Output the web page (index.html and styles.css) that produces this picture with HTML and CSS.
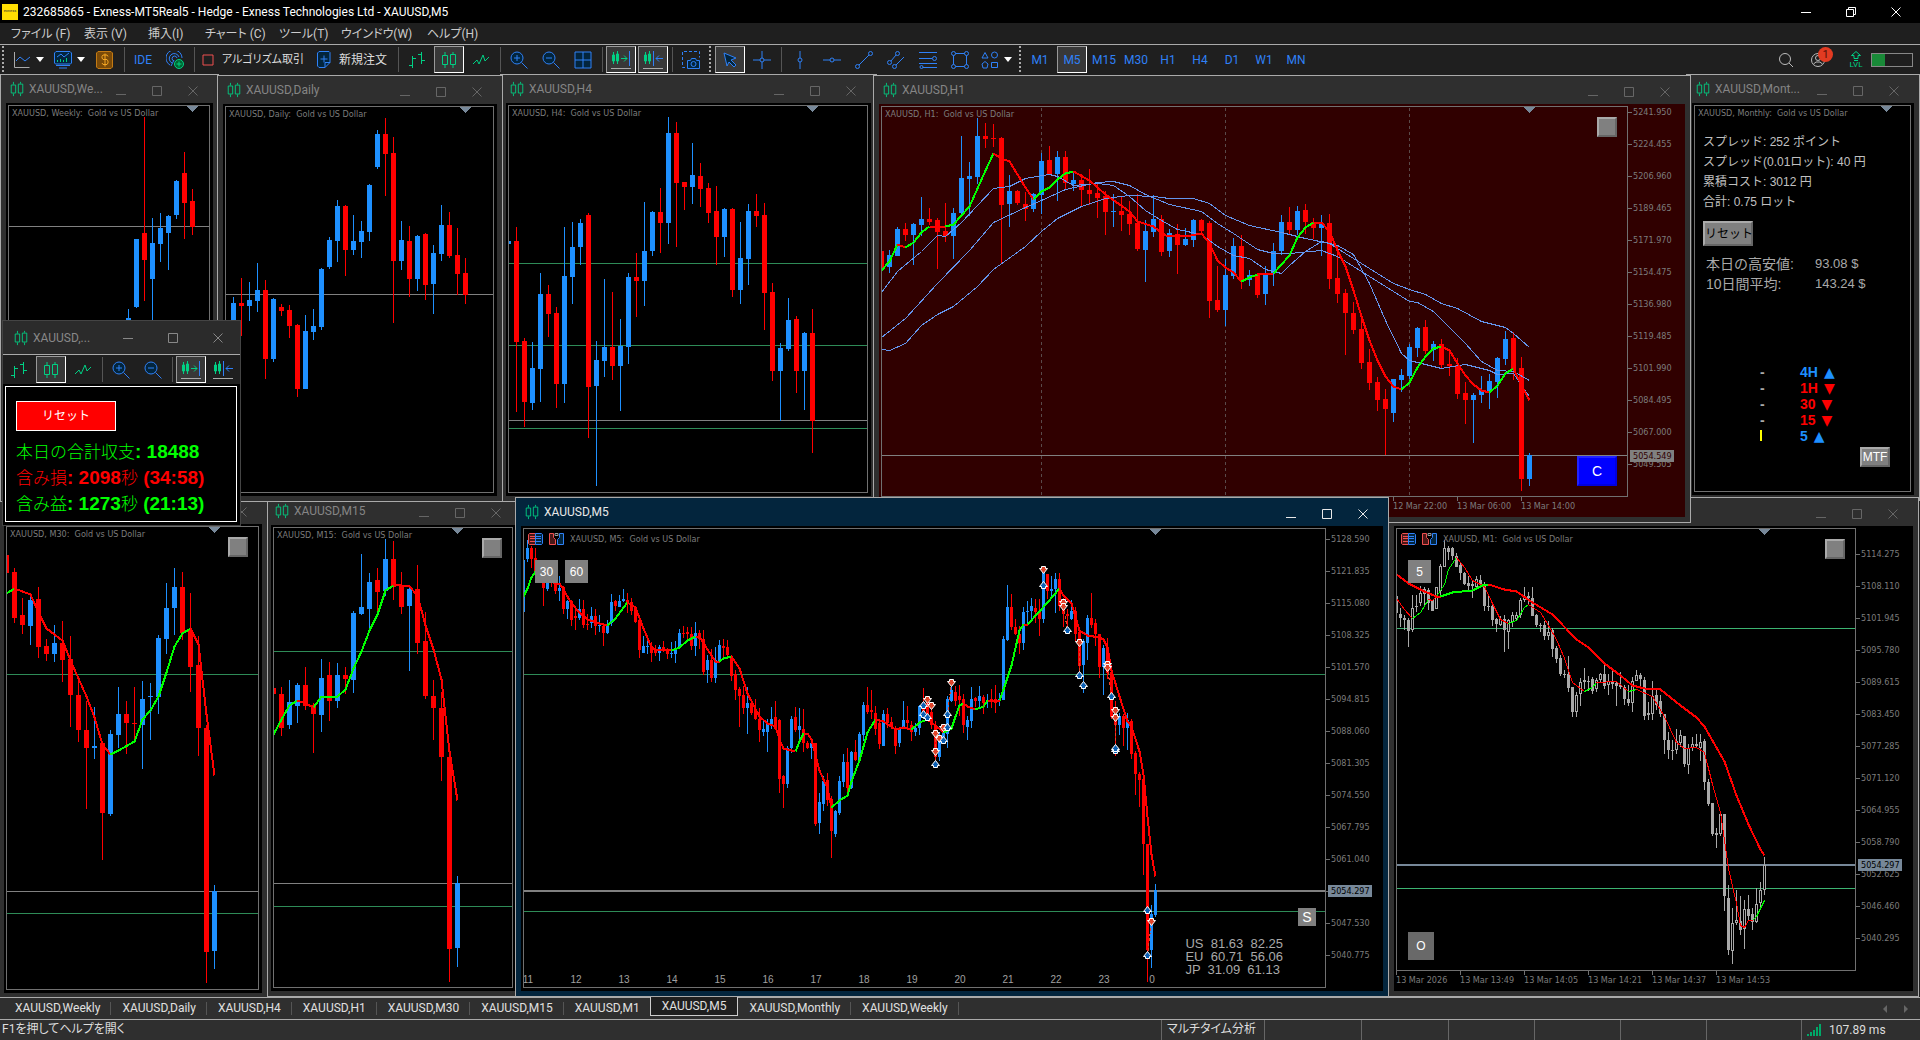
FILE: index.html
```html
<!DOCTYPE html>
<html lang="ja">
<head>
    <meta charset="UTF-8">
    <meta name="viewport" content="width=device-width, initial-scale=1.0">
    <title>232685865 - Exness-MT5Real5 - Hedge - Exness Technologies Ltd - XAUUSD,M5</title>
    <link rel="stylesheet" href="styles.css">
</head>
<body>
    <svg class="sprite" aria-hidden="true">
        <symbol id="candles" viewBox="0 0 18 18"><path d="M5 1v3M5 14v3M13 1v2M13 14v3M2.500 4.500h5v9h-5zM10.500 3.500h5v10h-5z"/></symbol>
        <symbol id="bars" viewBox="0 0 18 18"><path d="M4.500 5v12M1 14.500h3M5 7.500h3M13.500 1v12M10 3.500h3M14 9.500h3"/></symbol>
        <symbol id="line" viewBox="0 0 18 18"><path d="M1 13l4-4 2 4 4-9 2 6 4-4"/></symbol>
        <symbol id="zoomin" viewBox="0 0 18 18"><circle cx="7" cy="7" r="6" fill="#03253d"/><path d="M11.500 11.500l6 6M4 7h6M7 4v6"/></symbol>
        <symbol id="zoomout" viewBox="0 0 18 18"><circle cx="7" cy="7" r="6" fill="#03253d"/><path d="M11.500 11.500l6 6M4 7h6"/></symbol>
        <symbol id="scroll" viewBox="0 0 20 20"><path class="g" d="M2.500 2v12M6.500 1v13M1.500 5h2v6h-2zM5.500 4h2v7h-2zM10 8.500h6M13 5.500l3 3-3 3"/><path d="M18.500 1v15"/><path stroke="#aaa" d="M0 18.500h20"/></symbol>
        <symbol id="shift" viewBox="0 0 20 20"><path class="g" d="M2.500 2v12M6.500 1v13M1.500 5h2v6h-2zM5.500 4h2v7h-2z"/><path d="M10.500 1v15M13 8.500h7M16 5.500l-3 3 3 3"/><path stroke="#aaa" d="M0 18.500h20"/></symbol>
        <symbol id="min" viewBox="0 0 10 10"><path d="M0 8.500h10"/></symbol>
        <symbol id="max" viewBox="0 0 10 10"><path d="M.5.5h9v9h-9z"/></symbol>
        <symbol id="close" viewBox="0 0 10 10"><path d="M.5.5l9 9M9.500.5l-9 9"/></symbol>
        <symbol id="depth" viewBox="0 0 15 12"><path stroke="#f05050" fill="#4a1717" d="M7.500.5h-6l-1 1v9l1 1h6"/><path stroke="#2f81f7" fill="#03253d" d="M7.500.5h6l1 1v9l-1 1h-6z"/><path stroke="#f05050" d="M2 3.500h5M2 5.500h5M2 8.500h5"/><path stroke="#2f81f7" d="M8 3.500h5M8 5.500h5M8 8.500h5"/></symbol>
        <symbol id="oneclick" viewBox="0 0 15 12"><path stroke="#f05050" fill="#4a1717" d="M.5.5h4v4l2 2v5h-6z"/><path stroke="#2f81f7" fill="#03253d" d="M14.500.5h-4v4l-2 2v5h6z"/><path stroke="#999" d="M6 .5h3v2h-3z"/></symbol>
    </svg>

    <header class="titlebar">
        <span class="logo">exness</span>
        <h1>232685865 - Exness-MT5Real5 - Hedge - Exness Technologies Ltd - XAUUSD,M5</h1>
        <div class="controls">
            <button aria-label="最小化"><svg viewBox="0 0 10 10"><path d="M0 5.500h10"/></svg></button>
            <button aria-label="元に戻す"><svg viewBox="0 0 10 10"><path d="M.5 2.500h7v7h-7zM2.500 2.500v-2h7v7h-2"/></svg></button>
            <button aria-label="閉じる"><svg><use href="#close"/></svg></button>
        </div>
    </header>

    <nav class="menu">
        <button>ファイル (F)</button>
        <button>表示 (V)</button>
        <button>挿入(I)</button>
        <button>チャート (C)</button>
        <button>ツール(T)</button>
        <button>ウインドウ(W)</button>
        <button>ヘルプ(H)</button>
    </nav>

    <div class="toolbar">
        <i class="grip"></i>
        <button class="w40" aria-label="チャート"><svg viewBox="0 0 18 18"><path stroke="#aaa" d="M1.500 1v15.500h15"/><path d="M3 10l4-4 5 4 5-4"/></svg><i class="caret"></i></button>
        <button class="w38" aria-label="プロファイル"><svg viewBox="0 0 18 18"><path fill="#03253d" d="M2 .5h14l1.500 1.500v10l-1 1h-15l-1-1v-10z"/><path d="M3 6l4-3 3 3 5-4M2 14.500h14M5 17h8"/><path class="g" d="M3.500 11v-2M6.500 11v-3M9.500 11v-2M12.500 11v-4"/></svg><i class="caret"></i></button>
        <button aria-label="取引"><svg class="gold" viewBox="0 0 18 18"><path fill="#7a4a08" stroke="#c47a13" d="M2 .5h13l1.500 1.500v14l-1.500 1.500h-13l-1.500-1.500v-14z"/><path stroke="#f5a623" d="M12 5.500l-1-1.500h-4l-1 1.500v1.500l1 1.500h4l1 1.500v2l-1 1.500h-4l-1-1.500M9 2.500v13"/></svg></button>
        <i class="sep"></i>
        <button>IDE</button>
        <button aria-label="シグナル"><svg viewBox="0 0 18 18"><path d="M4 14a8 8 0 1 1 12-7M6 12a5 5 0 1 1 7-6M8 10a2.500 2.500 0 1 1 3-3M8 9l-3 6"/><circle class="g" cx="13" cy="13" r="4.500" fill="#063"/><path class="g" d="M10.500 13h5M13 10.500v5"/></svg></button>
        <i class="sep"></i>
        <button class="w110 text"><svg viewBox="0 0 12 12"><path stroke="#f05050" d="M1 1h10v10h-10z"/></svg>アルゴリズム取引</button>
        <button class="w84 text"><svg class="tall" viewBox="0 0 14 18"><path fill="#03253d" d="M2 .5h10l1 1v10l-5 5h-6l-1.500-1.500v-13zM8 16.500v-5h5M3.500 8h7M7 4.500v7"/></svg>新規注文</button>
        <i class="sep"></i>
        <button aria-label="バー"><svg class="green"><use href="#bars"/></svg></button>
        <button class="on" aria-label="ローソク足"><svg class="green"><use href="#candles"/></svg></button>
        <button aria-label="ライン"><svg class="green"><use href="#line"/></svg></button>
        <i class="sep"></i>
        <button aria-label="拡大"><svg><use href="#zoomin"/></svg></button>
        <button aria-label="縮小"><svg><use href="#zoomout"/></svg></button>
        <button aria-label="整列"><svg viewBox="0 0 18 18"><path fill="#03253d" d="M1 1h16v16h-16zM9 1v16M1 9h16"/></svg></button>
        <i class="sep"></i>
        <button class="on" aria-label="自動スクロール"><svg class="big"><use href="#scroll"/></svg></button>
        <button class="on" aria-label="チャートシフト"><svg class="big"><use href="#shift"/></svg></button>
        <i class="sep"></i>
        <button aria-label="スクリーンショット"><svg class="big" viewBox="0 0 20 20"><path stroke-dasharray="3 2" d="M4 17.500h-2.500v-16h17v6"/><path fill="#03253d" d="M6.500 10.500h3l1-2h4l1 2h3v8h-12z"/><circle cx="12.500" cy="14" r="2.500"/></svg></button>
        <i class="grip"></i>
        <button class="on" aria-label="カーソル"><svg viewBox="0 0 18 18"><path fill="#03253d" d="M3 2l12 5-5 2 5 5-2 2-5-5-2 4z"/></svg></button>
        <button aria-label="クロスヘア"><svg viewBox="0 0 18 18"><path d="M9 0v7M9 11v7M0 9h7M11 9h7"/><circle cx="9" cy="9" r="2"/></svg></button>
        <i class="sep"></i>
        <button aria-label="垂直線"><svg viewBox="0 0 18 18"><path d="M9 0v7M9 11v7"/><circle cx="9" cy="9" r="2"/></svg></button>
        <button aria-label="水平線"><svg viewBox="0 0 18 18"><path d="M0 9h7M11 9h7"/><circle cx="9" cy="9" r="2"/></svg></button>
        <button aria-label="トレンドライン"><svg viewBox="0 0 18 18"><circle cx="2.500" cy="15.500" r="2"/><circle cx="15.500" cy="2.500" r="2"/><path d="M4 14l10-10"/></svg></button>
        <button aria-label="チャネル"><svg viewBox="0 0 18 18"><circle cx="2.500" cy="11.500" r="2"/><circle cx="10.500" cy="2.500" r="2"/><circle cx="7.500" cy="15.500" r="2"/><path d="M4 10l5-6M9 14l8-8"/></svg></button>
        <button aria-label="フィボナッチ"><svg viewBox="0 0 18 18"><path d="M0 1.500h18M0 7.500h13M0 12.500h18M4 16.500h14"/><circle cx="15.500" cy="7.500" r="2"/><circle cx="2.500" cy="16" r="1.500"/></svg></button>
        <button aria-label="長方形"><svg viewBox="0 0 18 18"><circle cx="2.500" cy="2.500" r="2"/><circle cx="15.500" cy="2.500" r="2"/><circle cx="2.500" cy="15.500" r="2"/><circle cx="15.500" cy="15.500" r="2"/><path d="M4.500 2.500h9M4.500 15.500h9M2.500 4.500v9M15.500 4.500v9"/></svg></button>
        <button class="w39" aria-label="図形"><svg viewBox="0 0 18 18"><path d="M4 1.500l3 5.500h-6zM10.500 11.500h6v5h-6zM4 10.500l3 2.500-1 4h-4l-1-4z"/><circle cx="13.500" cy="4" r="3"/></svg><i class="caret"></i></button>
        <i class="grip"></i>
        <button>M1</button>
        <button class="on">M5</button>
        <button>M15</button>
        <button>M30</button>
        <button>H1</button>
        <button>H4</button>
        <button>D1</button>
        <button>W1</button>
        <button>MN</button>
        <div class="tray">
            <button aria-label="検索"><svg class="gray" viewBox="0 0 18 18"><circle cx="8" cy="8" r="5.500"/><path d="M12 12l4 4"/></svg></button>
            <button class="user" aria-label="アカウント"><svg class="gray" viewBox="0 0 18 18"><circle cx="9" cy="9" r="6.500"/><circle cx="9" cy="7" r="2.500"/><path d="M4.500 13l2.500-2h4l2.500 2"/></svg><b class="badge">1</b></button>
            <span class="lvl"><svg class="green" viewBox="0 0 12 10"><path d="M6 .5l4.500 4h-2.500v3h-4v-3h-2.500zM4 9.500h4"/></svg>LVL</span>
            <span class="battery"><i></i></span>
        </div>
    </div>

    <main class="desktop">
        <section class="window w-m15">
            <div class="caption"><svg class="green"><use href="#candles"/></svg><h2>XAUUSD,M15</h2>
                <div class="controls"><button aria-label="最小化"><svg><use href="#min"/></svg></button><button aria-label="最大化"><svg><use href="#max"/></svg></button><button aria-label="閉じる"><svg><use href="#close"/></svg></button></div></div>
            <div class="chart"><div class="plot"><svg class="series" data-chart="m15"></svg><p class="symbol">XAUUSD, M15:&nbsp; Gold vs US Dollar</p><button class="toggle" aria-label="切替"></button></div></div>
        </section>

        <section class="window w-m30">
            <div class="caption"><svg class="green"><use href="#candles"/></svg><h2></h2>
                <div class="controls"><button aria-label="最小化"><svg><use href="#min"/></svg></button><button aria-label="最大化"><svg><use href="#max"/></svg></button><button aria-label="閉じる"><svg><use href="#close"/></svg></button></div></div>
            <div class="chart"><div class="plot"><svg class="series" data-chart="m30"></svg><p class="symbol">XAUUSD, M30:&nbsp; Gold vs US Dollar</p><button class="toggle" aria-label="切替"></button></div></div>
        </section>

        <section class="window w-h4">
            <div class="caption"><svg class="green"><use href="#candles"/></svg><h2>XAUUSD,H4</h2>
                <div class="controls"><button aria-label="最小化"><svg><use href="#min"/></svg></button><button aria-label="最大化"><svg><use href="#max"/></svg></button><button aria-label="閉じる"><svg><use href="#close"/></svg></button></div></div>
            <div class="chart"><div class="plot"><svg class="series" data-chart="h4"></svg><p class="symbol">XAUUSD, H4:&nbsp; Gold vs US Dollar</p></div></div>
        </section>

        <section class="window w-weekly">
            <div class="caption"><svg class="green"><use href="#candles"/></svg><h2>XAUUSD,We...</h2>
                <div class="controls"><button aria-label="最小化"><svg><use href="#min"/></svg></button><button aria-label="最大化"><svg><use href="#max"/></svg></button><button aria-label="閉じる"><svg><use href="#close"/></svg></button></div></div>
            <div class="chart"><div class="plot"><svg class="series" data-chart="weekly"></svg><p class="symbol">XAUUSD, Weekly:&nbsp; Gold vs US Dollar</p></div></div>
        </section>

        <section class="window w-daily">
            <div class="caption"><svg class="green"><use href="#candles"/></svg><h2>XAUUSD,Daily</h2>
                <div class="controls"><button aria-label="最小化"><svg><use href="#min"/></svg></button><button aria-label="最大化"><svg><use href="#max"/></svg></button><button aria-label="閉じる"><svg><use href="#close"/></svg></button></div></div>
            <div class="chart"><div class="plot"><svg class="series" data-chart="daily"></svg><p class="symbol">XAUUSD, Daily:&nbsp; Gold vs US Dollar</p></div></div>
        </section>

        <section class="window w-monthly">
            <div class="caption"><svg class="green"><use href="#candles"/></svg><h2>XAUUSD,Mont...</h2>
                <div class="controls"><button aria-label="最小化"><svg><use href="#min"/></svg></button><button aria-label="最大化"><svg><use href="#max"/></svg></button><button aria-label="閉じる"><svg><use href="#close"/></svg></button></div></div>
            <div class="chart">
                <div class="plot">
                    <svg class="series" data-chart="monthly"></svg>
                    <p class="symbol">XAUUSD, Monthly:&nbsp; Gold vs US Dollar</p>
                    <div class="info">
                        <p>スプレッド: 252 ポイント</p>
                        <p>スプレッド(0.01ロット): 40 円</p>
                        <p>累積コスト: 3012 円</p>
                        <p>合計: 0.75 ロット</p>
                        <button class="bevel">リセット</button>
                        <dl class="range">
                            <dt>本日の高安値:</dt><dd>93.08 $</dd>
                            <dt>10日間平均:</dt><dd>143.24 $</dd>
                        </dl>
                        <ul class="trend">
                            <li class="up"><i>-</i>4H <span>▲</span></li>
                            <li class="down"><i>-</i>1H <span>▼</span></li>
                            <li class="down"><i>-</i>30 <span>▼</span></li>
                            <li class="down"><i>-</i>15 <span>▼</span></li>
                            <li class="up"><i class="mark"></i>5 <span>▲</span></li>
                        </ul>
                        <button class="bevel mtf">MTF</button>
                    </div>
                </div>
            </div>
        </section>

        <section class="window w-m1">
            <div class="caption"><svg class="green"><use href="#candles"/></svg><h2></h2>
                <div class="controls"><button aria-label="最小化"><svg><use href="#min"/></svg></button><button aria-label="最大化"><svg><use href="#max"/></svg></button><button aria-label="閉じる"><svg><use href="#close"/></svg></button></div></div>
            <div class="chart scaled timed">
                <div class="plot"><svg class="series" data-chart="m1"></svg>
                    <p class="symbol traded"><svg><use href="#depth"/></svg><svg><use href="#oneclick"/></svg>XAUUSD, M1:&nbsp; Gold vs US Dollar</p>
                    <div class="quick"><button>5</button></div>
                    <button class="toggle" aria-label="切替"></button>
                    <button class="order">O</button>
                </div>
                <ol class="prices"><li>5114.275</li><li>5108.110</li><li>5101.945</li><li>5095.780</li><li>5089.615</li><li>5083.450</li><li>5077.285</li><li>5071.120</li><li>5064.955</li><li>5058.790</li><li>5052.625</li><li>5046.460</li><li>5040.295</li></ol>
                <output class="last">5054.297</output>
                <ol class="times"><li>13 Mar 2026</li><li>13 Mar 13:49</li><li>13 Mar 14:05</li><li>13 Mar 14:21</li><li>13 Mar 14:37</li><li>13 Mar 14:53</li></ol>
            </div>
        </section>

        <section class="window w-h1">
            <div class="caption"><svg class="green"><use href="#candles"/></svg><h2>XAUUSD,H1</h2>
                <div class="controls"><button aria-label="最小化"><svg><use href="#min"/></svg></button><button aria-label="最大化"><svg><use href="#max"/></svg></button><button aria-label="閉じる"><svg><use href="#close"/></svg></button></div></div>
            <div class="chart scaled timed">
                <div class="plot"><svg class="series" data-chart="h1"></svg><p class="symbol">XAUUSD, H1:&nbsp; Gold vs US Dollar</p>
                    <button class="toggle" aria-label="切替"></button>
                    <button class="close-all">C</button>
                </div>
                <ol class="prices"><li>5241.950</li><li>5224.455</li><li>5206.960</li><li>5189.465</li><li>5171.970</li><li>5154.475</li><li>5136.980</li><li>5119.485</li><li>5101.990</li><li>5084.495</li><li>5067.000</li><li>5049.505</li></ol>
                <output class="last">5054.549</output>
                <ol class="times"><li>12 Mar 22:00</li><li>13 Mar 06:00</li><li>13 Mar 14:00</li></ol>
            </div>
        </section>

        <section class="window active w-m5">
            <div class="caption"><svg class="green"><use href="#candles"/></svg><h2>XAUUSD,M5</h2>
                <div class="controls"><button aria-label="最小化"><svg><use href="#min"/></svg></button><button aria-label="最大化"><svg><use href="#max"/></svg></button><button aria-label="閉じる"><svg><use href="#close"/></svg></button></div></div>
            <div class="chart scaled">
                <div class="plot"><svg class="series" data-chart="m5"></svg>
                    <p class="symbol traded"><svg><use href="#depth"/></svg><svg><use href="#oneclick"/></svg>XAUUSD, M5:&nbsp; Gold vs US Dollar</p>
                    <div class="quick"><button>30</button><button>60</button></div>
                    <button class="side">S</button>
                    <pre class="sessions">US  81.63  82.25
EU  60.71  56.06
JP  31.09  61.13</pre>
                    <ol class="hours"><li>11</li><li>12</li><li>13</li><li>14</li><li>15</li><li>16</li><li>17</li><li>18</li><li>19</li><li>20</li><li>21</li><li>22</li><li>23</li><li>0</li></ol>
                </div>
                <ol class="prices"><li>5128.590</li><li>5121.835</li><li>5115.080</li><li>5108.325</li><li>5101.570</li><li>5094.815</li><li>5088.060</li><li>5081.305</li><li>5074.550</li><li>5067.795</li><li>5061.040</li><li></li><li>5047.530</li><li>5040.775</li></ol>
                <output class="last">5054.297</output>
            </div>
        </section>

        <section class="floating">
            <div class="caption"><svg class="green"><use href="#candles"/></svg><h2>XAUUSD,...</h2>
                <div class="controls"><button aria-label="最小化"><svg viewBox="0 0 10 10"><path d="M0 5.500h10"/></svg></button><button aria-label="最大化"><svg><use href="#max"/></svg></button><button aria-label="閉じる"><svg><use href="#close"/></svg></button></div></div>
            <div class="toolbar">
                <button aria-label="バー"><svg class="green"><use href="#bars"/></svg></button>
                <button class="on" aria-label="ローソク足"><svg class="green"><use href="#candles"/></svg></button>
                <button aria-label="ライン"><svg class="green"><use href="#line"/></svg></button>
                <i class="sep"></i>
                <button aria-label="拡大"><svg><use href="#zoomin"/></svg></button>
                <button aria-label="縮小"><svg><use href="#zoomout"/></svg></button>
                <i class="sep"></i>
                <button class="on" aria-label="自動スクロール"><svg class="big"><use href="#scroll"/></svg></button>
                <button aria-label="チャートシフト"><svg class="big"><use href="#shift"/></svg></button>
            </div>
            <div class="summary">
                <button>リセット</button>
                <p>本日の合計収支<b>: 18488</b></p>
                <p class="loss">含み損<b>: 2098</b>秒<b> (34:58)</b></p>
                <p>含み益<b>: 1273</b>秒<b> (21:13)</b></p>
            </div>
        </section>
    </main>

    <nav class="tabs">
        <button>XAUUSD,Weekly</button>
        <button>XAUUSD,Daily</button>
        <button>XAUUSD,H4</button>
        <button>XAUUSD,H1</button>
        <button>XAUUSD,M30</button>
        <button>XAUUSD,M15</button>
        <button>XAUUSD,M1</button>
        <button class="current">XAUUSD,M5</button>
        <button>XAUUSD,Monthly</button>
        <button>XAUUSD,Weekly</button>
        <div class="arrows"><button aria-label="前へ"></button><button class="next" aria-label="次へ"></button></div>
    </nav>

    <footer class="status">
        <span>F1を押してヘルプを開く</span>
        <span>マルチタイム分析</span>
        <span></span><span></span><span></span><span></span><span></span><span></span>
        <span class="ping"><svg viewBox="0 0 15 12"><path d="M1 12v-2M4 12v-4M7 12v-6M10 12v-9M13 12v-12"/></svg>107.89 ms</span>
    </footer>

    <script src="charts.js"></script>
</body>
</html>
```
FILE: styles.css
```css
* {
    box-sizing: border-box;
}

body {
    margin: 0;
    height: 100vh;
    display: flex;
    flex-direction: column;
    overflow: hidden;
    background: #1f1f1f;
    color: #ddd;
    font-family: Roboto, "Noto Sans CJK JP", sans-serif;
    font-size: 12px;
    line-height: 16px;
}

button {
    padding: 0;
    border: 0;
    background: none;
    color: inherit;
    font: inherit;
}

h1, h2, p, ol, ul, dl, dd, pre {
    margin: 0;
    padding: 0;
    list-style: none;
    font-size: inherit;
    font-weight: normal;
}

svg {
    display: block;
    flex: none;
    width: 18px;
    height: 18px;
    fill: none;
    stroke: #2f81f7;
}

.sprite {
    position: absolute;
    width: 0;
    height: 0;
}

.green, .g {
    stroke: #00d084;
}

.gray {
    stroke: #bbb;
}

/* application frame */
.titlebar {
    flex: none;
    display: flex;
    align-items: center;
    height: 23px;
    padding: 0 2px;
    background: #000;
    color: #fff;
}

.logo {
    width: 16px;
    height: 16px;
    margin-right: 5px;
    background: #ffde02;
    color: #333;
    font-size: 4px;
    line-height: 14px;
    text-align: center;
}

.controls {
    display: flex;
    margin-left: auto;
}

.controls button {
    width: 45px;
    display: flex;
    justify-content: center;
}

.controls svg {
    width: 10px;
    height: 10px;
    stroke: currentColor;
}

.menu {
    flex: none;
    display: grid;
    grid-template-columns: 73px 64px 57px 74px 62px 86px 60px;
    height: 22px;
    padding: 0 11px;
    border-bottom: 1px solid #aaa;
    font-feature-settings: "palt";
    color: #ccc;
}

.menu button {
    text-align: left;
}

.toolbar {
    flex: none;
    display: flex;
    align-items: center;
    height: 29px;
    background: #1f1f1f;
    color: #2f81f7;
}

.toolbar button {
    flex: none;
    display: flex;
    align-items: center;
    justify-content: center;
    width: 30px;
    height: 27px;
    margin: 0 1px;
}

.toolbar .on {
    border: 1px solid #fff;
    border-top-color: #999;
    border-left-color: #999;
    background: #383838;
}

.toolbar .w40 { width: 40px; }
.toolbar .w38 { width: 38px; }
.toolbar .w39 { width: 39px; }
.toolbar .w84 { width: 84px; }
.toolbar .w110 { width: 110px; font-size: 11px; }

.toolbar .text {
    gap: 8px;
    color: #ddd;
    font-feature-settings: "palt";
}

.toolbar .text svg {
    width: 12px;
    height: 12px;
}

.toolbar .text .tall {
    width: 14px;
    height: 18px;
}

.toolbar .big {
    width: 20px;
    height: 20px;
}

.sep {
    flex: none;
    width: 1px;
    height: 25px;
    margin: 0 2px 0 3px;
    background: #555;
}

.grip {
    flex: none;
    width: 2px;
    height: 27px;
    margin: 0 3px 0 2px;
    background: repeating-linear-gradient(#aaa 0 2px, transparent 2px 4px);
}

.caret {
    margin-left: 5px;
    border: 4px solid transparent;
    border-top: 5px solid #fff;
    border-bottom: 0;
}

.tray {
    display: flex;
    align-items: center;
    margin-left: auto;
    padding-right: 7px;
}

.user {
    position: relative;
}

.badge {
    position: absolute;
    top: 1px;
    right: 0;
    width: 15px;
    height: 15px;
    border-radius: 8px;
    background: #e23b22;
    color: #551008;
    font-weight: normal;
    font-size: 11px;
    line-height: 15px;
}

.lvl {
    width: 22px;
    margin: 0 4px 0 11px;
    color: #00d084;
    font-size: 8px;
    line-height: 8px;
    text-align: center;
}

.lvl svg {
    width: 12px;
    height: 10px;
    margin: 0 auto;
}

.battery {
    width: 42px;
    height: 14px;
    border: 1px solid #888;
}

.battery i {
    display: block;
    width: 32%;
    height: 100%;
    background: #198a38;
}

/* chart windows */
.desktop {
    position: relative;
    flex: 1;
    overflow: hidden;
    background: #1f1f1f;
}

.window {
    position: absolute;
    display: flex;
    flex-direction: column;
    padding: 0 5px 5px;
    border: 1px solid #aaa;
    background: #2f2f2f;
    color: #858585;
}

.w-weekly { left: 0; top: 0; width: 219px; height: 428px; }
.w-daily { left: 217px; top: 1px; width: 286px; height: 427px; }
.w-h4 { left: 500px; top: 0; width: 377px; height: 428px; }
.w-h1 { left: 873px; top: 1px; width: 818px; height: 448px; }
.w-monthly { left: 1686px; top: 0; width: 234px; height: 427px; }
.w-m30 { left: -2px; top: 421px; width: 270px; height: 504px; }
.w-m15 { left: 265px; top: 422px; width: 257px; height: 501px; }
.w-m5 { left: 515px; top: 423px; width: 874px; height: 500px; }
.w-m1 { left: 1388px; top: 423px; width: 531px; height: 500px; }

.active {
    background: #03253d;
    color: #e8e8e8;
}

.caption {
    flex: none;
    display: flex;
    align-items: center;
    height: 28px;
}

.caption h2 {
    flex: 1;
    min-width: 0;
    white-space: nowrap;
}

.caption > svg {
    width: 16px;
    height: 16px;
    margin: 0 4px 0 3px;
}

.window .controls {
    margin-right: 2px;
    padding-top: 3px;
    color: #666;
}

.window .controls button {
    width: 36px;
}

.active .controls {
    color: #e8e8e8;
}

.chart {
    position: relative;
    flex: 1;
    display: grid;
    grid-template-columns: 1fr;
    grid-template-rows: 1fr;
    padding: 2px 3px 3px 2px;
    background: #000;
    color: #7c7c7c;
    font-family: "DejaVu Sans Condensed", "Liberation Sans", sans-serif;
    font-size: 9px;
    line-height: 12px;
}

.scaled {
    grid-template-columns: 1fr 57px;
    padding-right: 0;
}

.timed {
    grid-template-rows: 1fr 20px;
    padding-bottom: 0;
}

.plot {
    position: relative;
    min-width: 0;
    min-height: 0;
    border: 1px solid #707070;
    overflow: hidden;
}

.plot button {
    font-family: "Liberation Sans", "Noto Sans CJK JP", sans-serif;
}

.series {
    position: absolute;
    width: 100%;
    height: 100%;
    stroke: none;
    shape-rendering: crispEdges;
}

.symbol {
    position: relative;
    display: flex;
    padding-left: 3px;
    white-space: nowrap;
    line-height: 14px;
}

.traded {
    align-items: center;
    gap: 6px;
    padding: 3px 4px;
}

.traded svg {
    width: 15px;
    height: 12px;
}

.prices {
    overflow: hidden;
}

.prices li {
    display: flex;
    align-items: center;
    gap: 1px;
    height: 32px;
}

.prices li::before {
    content: "";
    width: 4px;
    height: 1px;
    background: #707070;
}

.w-m5 .prices { margin-top: -5px; }
.w-m1 .prices { padding-top: 10px; }
.w-h1 .prices { margin-top: -10px; }

.last {
    position: absolute;
    right: 11px;
    width: 44px;
    padding-left: 3px;
    background: #778899;
    color: #000;
    line-height: 12px;
}

.w-m5 .last { top: 359px; }
.w-m1 .last { top: 333px; }
.w-h1 .last { top: 346px; background: #808080; color: #300000; }

.times {
    grid-column: 1 / -1;
    display: flex;
}

.times li {
    flex: none;
    width: 64px;
    padding-top: 3px;
    white-space: nowrap;
    background: linear-gradient(#707070, #707070) no-repeat 0 0 / 1px 4px;
}

.w-h1 .chart { background: #300000; }
.w-h1 .times { padding-left: 512px; }

.hours {
    position: absolute;
    left: -20px;
    bottom: 0;
    display: flex;
    color: #a0a0a0;
    font-family: "Liberation Sans", sans-serif;
    font-size: 10px;
    line-height: 14px;
}

.hours li {
    width: 48px;
    text-align: center;
}

.toggle, .bevel {
    border: 2px solid #666;
    border-top-color: #aaa;
    border-left-color: #aaa;
    background: #808080;
}

.toggle {
    position: absolute;
    top: 10px;
    right: 10px;
    width: 20px;
    height: 20px;
}

.quick {
    position: absolute;
    top: 31px;
    left: 11px;
    display: flex;
    gap: 7px;
}

.quick button, .order, .side {
    width: 23px;
    height: 23px;
    background: #808080;
    color: #fff;
    font-size: 12px;
}

.plot .order {
    position: absolute;
    left: 11px;
    bottom: 10px;
    width: 26px;
    height: 28px;
    background: #696969;
}

.plot .side {
    position: absolute;
    right: 9px;
    bottom: 61px;
    width: 18px;
    height: 18px;
    font-size: 14px;
}

.plot .close-all {
    position: absolute;
    right: 10px;
    bottom: 10px;
    width: 40px;
    height: 30px;
    border: 2px solid #0000dd;
    border-top-color: #2222ff;
    border-left-color: #2222ff;
    background: #0000ff;
    color: #fff;
    font-size: 14px;
}

.sessions {
    position: absolute;
    right: 42px;
    bottom: 11px;
    color: #a9a9a9;
    font-family: "Liberation Sans", sans-serif;
    font-size: 13px;
    line-height: 13px;
}

/* figures in the monthly window */
.info {
    position: relative;
    padding: 12px 0 0 8px;
    color: #c0c0c0;
    font-family: "Liberation Sans", "Noto Sans CJK JP", sans-serif;
    font-size: 12px;
    line-height: 20px;
    white-space: nowrap;
}

.info .bevel {
    display: block;
    width: 50px;
    height: 25px;
    margin: 9px 0 8px;
    color: #000;
    font-size: 12px;
    line-height: 20px;
}

.range {
    display: grid;
    grid-template-columns: 109px 1fr;
    padding-left: 3px;
    color: #a9a9a9;
    font-size: 13px;
}

.range dt {
    font-size: 14px;
}

.trend {
    padding: 70px 0 0 57px;
    font-size: 14px;
    font-weight: bold;
    line-height: 16px;
}

.trend li {
    display: flex;
    gap: 6px;
}

.trend i {
    width: 34px;
    color: #a9a9a9;
    font-style: normal;
}

.trend span {
    font-family: "DejaVu Sans", sans-serif;
    font-size: 14px;
}

.trend .mark {
    width: 2px;
    height: 11px;
    margin: 2px 32px 0 0;
    background: #ffff00;
}

.up { color: #1e90ff; }
.down { color: #ff0000; }

.info .mtf {
    width: 30px;
    height: 20px;
    margin: 3px 20px 0 auto;
    color: #fff;
    line-height: 14px;
}

/* detached window */
.floating {
    position: absolute;
    left: 2px;
    top: 246px;
    width: 239px;
    height: 206px;
    display: flex;
    flex-direction: column;
    border: 1px solid #444;
    background: #000;
    color: #888;
    overflow: hidden;
}

.floating .caption {
    height: 34px;
    padding-left: 7px;
    border-bottom: 1px solid #aaa;
    background: #2b2b2b;
}

.summary {
    flex: 1;
    margin: 2px 3px 3px 2px;
    padding: 14px 10px 0;
    border: 1px solid #fff;
    color: #00ff00;
    font-family: "Liberation Sans", "Noto Sans CJK JP", sans-serif;
    font-size: 17px;
    line-height: 25px;
    white-space: nowrap;
}

.summary p {
    font-weight: 300;
}

.summary b {
    font-size: 19px;
    font-weight: bold;
    white-space: pre;
}

.summary button {
    display: block;
    width: 100px;
    height: 30px;
    margin-bottom: 8px;
    border: 1px solid #fff;
    background: #ff0000;
    color: #fff;
    font-size: 12px;
}

.summary .loss {
    color: #ff0000;
}

/* chart tabs and status bar */
.tabs {
    flex: none;
    display: flex;
    height: 22px;
    padding-left: 4px;
    border-top: 1px solid #aaa;
    background: #2f2f2f;
    color: #e0e0e0;
}

.tabs > button {
    padding: 0 11px 1px;
    background: linear-gradient(#555, #555) no-repeat 100% 4px / 1px 13px;
}

.tabs .current {
    height: 19px;
    margin: -1px 0 0 -1px;
    border: 1px solid #ccc;
    border-top: 0;
    background: #1f1f1f;
}

.arrows {
    display: flex;
    align-items: center;
    gap: 17px;
    margin-left: auto;
    padding-right: 12px;
}

.arrows button {
    border: 4px solid transparent;
    border-left: 0;
    border-right-color: #666;
}

.arrows .next {
    border: 4px solid transparent;
    border-right: 0;
    border-left-color: #666;
}

.status {
    flex: none;
    display: grid;
    grid-template-columns: 1fr 103px 97px 87px 86px 86px 86px 95px 119px;
    height: 21px;
    border-top: 1px solid #aaa;
    background: #2f2f2f;
    font-feature-settings: "palt";
    line-height: 19px;
}

.status span {
    padding-left: 2px;
}

.status span + span {
    padding-left: 5px;
    border-left: 1px solid #666;
}

.ping {
    display: flex;
    align-items: center;
    gap: 7px;
}

.ping svg {
    width: 15px;
    height: 12px;
    stroke: #00a868;
    stroke-width: 2;
}
```
FILE: charts.js
```js
// One bar: u (up) or d (down), then high, body top, body bottom, low.
// x0/step are pixels; vertical values are turned into pixels with (v - top) / k.
const RED = '#ff0000', LIME = '#00ff00', BLUE = '#6495ed', GREEN = '#2e8b57', GRAY = '#808080';

const charts = {
    weekly: {
        x0: 119, step: 8, body: 5, top: 108, k: 3,
        levels: [[469, GRAY]],
        bars: `u717,744,790,800 u507,507,711,714 d141,489,570,695 u444,519,627,760 u429,474,522,576 u435,438,489,600
            u330,333,435,447 d246,309,399,507 d357,393,471,495`
    },
    daily: {
        x0: 7, step: 8, body: 5, top: 111, k: 3,
        levels: [[673, GRAY]],
        bars: `u681,699,755,760 d624,699,708,798 u636,690,708,753 u579,660,693,726 d630,660,867,927 u684,687,867,876
            d702,711,723,738 d705,720,768,804 d762,765,957,981 u735,783,957,957 u717,768,786,810 u594,597,771,780
            u501,510,591,597 u390,408,513,576 d405,408,540,618 u435,513,540,555 u453,483,516,564 u342,345,486,513
            u180,192,291,297 d144,192,252,378 d201,249,573,759 u453,510,573,600 d468,513,627,681 u495,498,627,663
            d489,492,645,690 u525,549,642,732 u405,465,552,573 d426,465,558,564 d474,555,612,675 d564,609,675,702`
    },
    h4: {
        x0: -1, step: 8, body: 5, top: 108, k: 3,
        levels: [[580, GREEN], [826, GREEN], [1075, GREEN], [1051, GRAY]],
        bars: `u514,514,522,522 d471,513,816,1026 d804,813,996,1071 u816,894,999,1020 u609,672,897,996 d645,672,732,801
            d711,729,942,1014 u471,618,942,999 u456,531,621,702 u447,459,531,585 d429,435,951,1104 u813,870,948,1250
            u627,831,873,921 d666,831,888,930 u747,828,888,1023 u609,621,831,882 d549,621,633,741 u396,543,633,708
            u423,426,543,558 d354,426,459,549 u141,189,459,522 d156,189,339,531 d336,336,351,420 u219,315,351,402
            d279,318,357,411 d339,354,429,459 d348,423,501,585 u414,417,501,561 d414,417,660,681 u456,564,660,702
            u402,423,567,645 d372,423,438,471 d399,435,669,780 d639,666,903,933 u819,834,903,1053 u684,750,837,843
            d738,747,903,969 u786,789,903,1020 d717,789,1053,1149`
    },
    h1: {
        x0: -1, step: 8, body: 5, top: 111, k: 3,
        grid: [20, 43, 66],
        levels: [[1156, GRAY]],
        bars: `d543,543,600,600 u540,555,591,609 u471,477,558,558 d459,477,495,513 u459,462,495,585 u381,447,465,498
            d414,447,456,465 d444,450,486,597 d399,483,498,516 u414,429,498,567 u198,324,429,432 u276,318,327,438
            u144,198,321,342 d159,198,207,234 d162,204,206,231 d201,204,405,579 u315,363,402,471 d360,363,399,405
            d366,402,417,453 u369,372,417,426 u249,273,375,432 d228,270,312,312 u243,261,312,393 d243,261,339,360
            u309,330,342,363 d312,330,360,411 d297,360,372,405 d342,369,384,444 d363,378,426,495 u372,423,426,471
            d381,423,435,483 d393,432,462,495 d372,459,537,543 u450,483,540,636 u375,447,486,501 d435,447,546,558
            u477,489,543,561 d462,492,525,612 u474,507,525,528 u447,450,510,531 d447,450,483,489 d453,459,693,744
            d588,690,720,726 u567,615,720,768 u504,528,618,627 d495,528,630,657 u600,615,630,648 d612,615,675,684
            u588,615,672,705 u519,543,609,648 u435,456,543,555 d411,456,480,492 u408,423,480,495 d402,420,456,492
            d444,456,474,507 u435,459,474,558 d432,459,627,657 d525,624,672,699 d657,669,729,855 d696,729,780,792
            d738,777,879,897 d837,876,939,960 d921,936,990,1023 d957,987,1017,1155 u927,927,1029,1056 u897,915,930,966
            u822,831,918,927 u771,774,834,861 d750,771,843,852 u813,822,840,873 d807,822,885,894 d840,882,888,918
            d864,885,972,987 d936,969,990,1062 u969,975,990,1119 u918,960,975,999 u912,933,966,1017 u861,864,936,984
            u783,807,867,885 d786,804,900,930 d861,894,1227,1263 u1149,1155,1227,1248`,
        lines: [
            [BLUE, 1, '0,668 2,604 5,543 7,497 8,499 10,458 14,356 16,348 18,325 21,313 22,318 24,345 27,341 29,346 31,380 33,420 35,450 37,478 40,492 42,530 44,555 46,565 48,597 50,609 51,586 53,545 55,515 57,525 59,552 61,640 63,750 65,850 66,870 70,895 73,884 76,902 77,912 79,910 80,945 81,978'],
            [BLUE, 1, '0,803 3,745 7,640 11,540 14,458 18,413 20,390 23,358 27,338 29,334 31,346 33,372 36,402 40,425 42,460 44,490 47,537 49,550 51,550 55,540 57,560 60,605 66,693 67,697 69,725 73,820 75,873 77,900 79,903 81,932'],
            [BLUE, 1, '0,838 1,841 3,820 5,765 7,733 9,708 12,650 14,598 18,530 20,485 22,445 25,410 28,386 31,377 34,380 36,384 39,385 41,400 43,435 46,465 50,487 53,505 56,520 57,535 60,580 64,640 66,657 68,672 70,700 72,715 75,753 78,772 79,790 81,832'],
            [LIME, 2, '0,600 1,573 2,524'],
            [RED, 2, '2,524 3,532'],
            [LIME, 2, '3,532 4,516 5,487 6,468'],
            [RED, 2, '6,468 8,468'],
            [LIME, 2, '8,468 9,464 10,437 11,408 12,356 13,300 14,251'],
            [RED, 2, '14,251 15,264 16,275 17,313 18,353 19,388'],
            [LIME, 2, '19,388 20,363 21,353 22,328 23,309 24,305'],
            [RED, 2, '24,305 26,330 28,372 31,423 32,455 34,470 35.5,495 38,500 40,491 41,520 42,570 43,592 44,608 45,635'],
            [LIME, 2, '45,635 46,622 47,613'],
            [RED, 2, '47,613 49,610'],
            [LIME, 2, '49,610 50,583 51,555 52,503 53,472 54,458'],
            [RED, 2, '54,458 55,456 56,485 57,540 58,590 59,660 60,740 61,810 62,872 63,920 64,948 65,958'],
            [LIME, 2, '65,958 66,938 67,893 68,858 69,836 70,829'],
            [RED, 2, '70,829 71,840 72,880 73,915 74,943 75,960 76,966'],
            [LIME, 2, '76,966 77,945 78,910 79,895'],
            [RED, 2, '79,895 80,945 81,990']
        ]
    },
    monthly: { x0: 191, step: 8, body: 5, top: 108, k: 3, bars: '' },
    m30: {
        x0: -1, step: 8, body: 5, top: 105.5, k: 2.851,
        levels: [[525, GREEN], [1207, GREEN], [1144, GRAY]],
        bars: `d188,188,237,237 d225,234,365,382 d308,359,385,413 u294,314,388,442 d279,311,448,479 d425,445,468,490
            u385,439,468,493 d376,439,485,550 d419,482,587,676 d545,587,687,721 d602,687,736,912 u619,730,738,767
            d721,724,921,1055 u687,698,924,932 u562,639,701,738 d602,639,667,753 d564,667,669,716 u545,596,670,798
            u553,590,592,713 u416,422,593,639 u268,339,425,468 u225,277,339,416 d234,277,408,428 d294,402,505,576
            d419,499,679,761 d670,679,1320,1408 u1129,1144,1317,1368`,
        lines: [
            [LIME, 2, '0,294 1,281'],
            [RED, 2, '1,282 3,298 4,350 5,395 7,430 8,485 10,590 11,650 12,725 13,753'],
            [LIME, 2, '13,753 14,744 16,718 17,655 18,630 19,588 20,520 21,445 22,408 23,394'],
            [RED, 2, '23,394 24,440 25,640 26,813']
        ]
    },
    m15: {
        x0: -1, step: 8, body: 5, top: 108.3, k: 2.851,
        levels: [[460, GREEN], [1187, GREEN], [1121, GRAY]],
        bars: `d567,567,584,584 d564,582,679,704 u542,607,670,684 u553,556,616,667 d505,556,616,630 d610,613,641,750
            u482,536,644,690 d493,530,602,661 u496,530,604,624 d507,530,539,582 u345,351,542,579 u185,334,354,359
            u237,265,342,405 d225,259,291,348 u140,197,288,305 d148,197,279,316 d234,271,336,356 u279,285,331,516
            d214,285,439,470 d348,433,590,596 d542,590,624,713 d576,624,764,830 d764,764,1309,1403 u1103,1123,1306,1360`,
        lines: [
            [LIME, 2, '0,698 1,655 2,615 3,601'],
            [RED, 2, '3,601 4,610 5,619'],
            [LIME, 2, '5,619 6,590 8,590 9,570 10,510 11,460 12,400 13,355 14,287 15,273'],
            [RED, 2, '15,270 17,276 18,300 19,385 20,455 21,540 22,745 23,884']
        ]
    },
    m5: {
        x0: -1, step: 4, body: 3, top: 111.2, k: 2.851,
        levels: [[525, GREEN], [1201, GREEN], [1143, GRAY, 2]],
        bars: `u202,202,348,348 u143,166,197,208 d160,166,197,225 d168,194,235,240 d200,205,250,262 d230,240,282,331
            u240,262,285,288 d240,255,265,279 d250,262,288,297 u248,282,288,319 d274,279,342,354 u314,319,342,368
            d314,319,371,388 d331,362,365,402 u311,342,365,371 d316,342,385,396 d354,384,387,402 u336,362,382,396
            d342,362,388,416 u359,387,389,405 d382,388,408,445 u371,385,408,413 u299,322,382,388 d314,319,331,345
            u302,319,334,336 u285,311,317,322 d294,314,322,351 d308,322,345,359 d334,336,379,382 d359,371,459,479
            u419,447,465,465 u428,447,450,470 d436,447,465,493 d442,459,465,476 u442,450,465,488 d433,450,456,462
            d453,459,468,482 u436,467,469,479 u433,453,470,496 u399,408,450,456 d388,408,412,422 d393,406,412,430
            d391,411,445,459 u379,408,445,476 d402,410,425,456 d402,425,519,530 u473,485,516,553 d456,485,536,550
            u450,485,536,553 u430,442,488,493 d425,445,453,479 d430,450,473,476 d473,479,533,547 d516,527,573,599
            d562,570,590,676 d559,587,622,639 u564,610,622,696 d599,610,636,642 d596,627,653,656 d624,653,687,721
            u656,684,690,704 u653,667,690,747 u619,653,670,682 d604,650,684,687 d653,656,824,864 d813,818,841,909
            u730,738,841,852 u647,653,738,750 d619,650,687,690 u624,673,687,713 d627,684,724,747 d718,724,738,741
            u713,724,738,767 d724,724,955,958 u864,892,952,981 u818,830,898,918 d807,827,884,901 d875,881,975,1052
            u915,918,981,992 u816,830,921,929 u755,778,833,847 d736,778,850,872 u745,747,850,855 d713,747,770,775
            u690,698,770,775 u607,613,701,716 d564,613,633,639 d573,628,634,655 d616,636,684,700 d660,667,727,741
            u630,639,730,730 d622,639,667,679 d650,662,676,684 d673,679,730,753 u676,682,724,733 u602,656,682,684
            d616,656,667,680 d660,670,690,718 u667,679,690,704 u613,616,679,701 d567,605,640,640 d590,600,640,655
            d620,633,670,682 d660,670,762,795 u690,700,762,773 u680,690,706,715 u590,596,698,738 u556,573,602,607
            d559,576,602,616 d556,590,599,647 d582,596,670,693 u645,656,676,713 u562,596,661,679 d593,594,603,619
            u559,590,604,622 d587,593,610,639 u584,599,605,622 d568,597,602,622 d556,597,608,636 u579,598,600,616
            u419,425,599,599 u271,336,428,433 d297,336,391,402 d368,391,411,416 d388,411,439,470 u336,348,439,459
            u319,345,347,385 u308,331,345,368 d311,339,350,382 d311,345,368,419 u222,235,368,382 d242,242,288,311
            u248,283,288,311 u237,254,285,351 d239,254,331,345 d308,320,356,393 d340,354,362,390 u316,345,368,371
            d334,345,413,433 d400,405,502,530 u425,433,499,579 u359,365,439,485 d296,365,385,396 d368,382,411,447
            d411,413,507,536 u442,453,505,587 d422,453,522,539 d510,519,650,653 d602,640,670,761 u636,647,670,701
            d640,647,681,730 u636,656,681,744 d653,661,753,767 d745,750,810,870 d804,810,827,904 d824,824,1012,1100
            d1012,1012,1314,1403 u1186,1209,1314,1363 u1126,1143,1212,1220`,
        lines: [
            [LIME, 2, '0,303 1,282 2,250 3,232'],
            [RED, 2, '3,232 5,250 8,268 9,268 10,284 12,325 14,350 16,368 19,380 21,385'],
            [LIME, 2, '21,385 23,365 26,320'],
            [RED, 2, '26,320 28,334 30,395 32,450 33,456 37,459'],
            [LIME, 2, '37,459 39,450 41,428 43,419'],
            [RED, 2, '43,419 44,419 46,455 48,488 49,490'],
            [LIME, 2, '49,490 50,480 52,476'],
            [RED, 2, '52,476 54,510 56,580 59,645 61,667 63,675 64,710 65,738 68,746'],
            [LIME, 2, '68,746 69,718 70,694'],
            [RED, 2, '70,694 71,693 72,710 74,800 76,850 77,905'],
            [LIME, 2, '77,905 79,884 81,870 82,830 84,770 86,690 88,653'],
            [RED, 2, '88,653 90,661 93,682 95,678 97,682'],
            [LIME, 2, '97,682 99,662 101,655'],
            [RED, 2, '101,655 103,672 105,692'],
            [LIME, 2, '105,692 107,680 108,645 109,615 110,608'],
            [RED, 2, '110,608 111,618 113,625'],
            [LIME, 2, '113,625 115,618 116,600'],
            [RED, 2, '116,600 119,601'],
            [LIME, 2, '119,601 120,570 122,500 124,400 125,384'],
            [RED, 2, '125,384 126,384'],
            [LIME, 2, '126,384 129,345 131,320 134,282'],
            [RED, 2, '134,282 135,300 137,325 139,400 141,414 144,420 145,425 146,450 147,515 149,590 151,660 152,675 154,745 155,810 156,930 157,1040 158,1103']
        ],
        links: ['135,333 136,402', '139,435 139,528', '146,507 147,589', '148,648 148,738', '107,549 106,640', '103,694 103,782', '156,1326 157,1229'],
        trades: `s107,549 s101,597 s102,614 b100,613 b100,639 b101,648 s105,678 b106,640 b106,677 s103,694 s104,708 b105,713
            s103,745 b103,782 s130,227 b130,271 s135,320 s135,333 b136,402 s139,435 b139,528 b140,556 s146,497 s146,507
            b147,589 s148,629 s148,648 b148,743 b148,738 b156,1198 s157,1229 b156,1326`
    },
    m1: {
        x0: -1, step: 4, body: 3, top: 111.2, k: 2.851, hollow: '#a9a9a9',
        levels: [[394, '#3cb371'], [1136, '#3cb371'], [1069, '#778899', 2]],
        bars: `d305,305,353,353 d337,354,365,391 d357,365,373,400 d365,371,404,450 u302,337,402,405 u302,331,334,350
            u274,294,325,333 u279,284,297,331 d280,287,325,343 d316,316,345,347 u279,279,340,342 u212,218,290,300
            u145,168,220,220 d160,168,177,200 d165,168,190,200 d182,191,220,222 d210,214,238,258 d235,237,270,271
            d248,268,274,290 d259,270,274,308 u248,256,277,279 d245,259,269,273 d265,270,331,347 d305,331,335,347
            d329,333,371,390 d367,370,384,405 u360,370,387,390 d359,370,402,462 u370,373,407,456 u348,357,378,393
            u348,357,369,375 u308,314,357,367 u279,303,316,320 d291,305,308,330 d279,308,360,362 d356,357,385,393
            d380,385,388,405 d376,387,418,430 u376,405,419,430 d396,402,455,478 d447,453,484,495 d473,479,527,532
            d514,525,528,537 d476,525,567,578 d562,562,635,650 u576,585,635,650 u537,548,583,616 u510,543,550,568
            d533,545,547,575 d535,540,575,582 u537,542,570,576 u524,525,543,553 d500,525,559,570 u525,545,558,587
            d510,545,554,570 d545,553,560,616 d520,556,563,570 d556,563,598,613 d556,597,610,618 u534,545,608,633
            u514,528,545,547 d523,528,539,560 d535,543,646,656 u607,637,642,656 u547,590,640,656 d572,585,613,628
            d587,603,641,648 d640,641,715,753 d690,715,744,767 u713,742,746,770 u682,718,743,755 u687,701,722,733
            d702,704,784,792 u725,738,786,810 u707,725,738,745 d698,725,730,736 u698,721,738,773 d710,717,835,858
            d825,835,898,902 d893,895,983,989 u966,979,986,1021 u924,924,983,989 d924,924,1160,1203 d1127,1166,1314,1326
            u1194,1235,1317,1354 u1141,1227,1235,1243 d1158,1230,1257,1269 u1169,1196,1252,1311 d1155,1197,1216,1226
            d1192,1209,1232,1257 u1135,1181,1232,1235 u1118,1141,1180,1189 u1049,1070,1141,1155`,
        lines: [
            [RED, 1, '0,308 2,342 4,366'],
            [LIME, 1, '4,366 6,350 8,313'],
            [RED, 1, '8,313 9,315 10,305'],
            [LIME, 1, '10,305 12,270 13,228 15,193'],
            [RED, 1, '15,193 17,220 19,258 22,275 24,325 26,370 28,380'],
            [LIME, 1, '28,380 30,372 32,335 33,326'],
            [RED, 1, '33,326 36,350 38,385 40,425 42,480 44,550 47,575'],
            [LIME, 1, '47,575 49,562 50,548'],
            [RED, 1, '50,548 55,547 58,574'],
            [LIME, 1, '58,574 60,570'],
            [RED, 1, '60,568 64,590 67,645 70,720 72,737 75,735 77,748 79,840 81,920 83,1080 85,1180 86,1243 87,1247 88,1228 89,1227'],
            [LIME, 1, '89,1227 90,1215 92,1170'],
            [RED, 2, '0,241 3,268 7,290 10,305 11,305'],
            [LIME, 2, '11,305 14,291 19,286 22,270 23,270'],
            [RED, 2, '23,270 27,284 30,289 34,320 39,355 45,425 48,448 52,495 56,530 59,556 62,566 66,570 71,615 75,650 77,675 79,715 82,775 85,870 88,955 91,1025 92,1041']
        ]
    }
};

function add(svg, tag, attrs) {
    const el = document.createElementNS('http://www.w3.org/2000/svg', tag);
    for (const key in attrs) el.setAttribute(key, attrs[key]);
    svg.appendChild(el);
}

function drawChart(svg, c) {
    const x = i => c.x0 + i * c.step;
    const y = v => Math.floor((v - c.top) / c.k);
    const points = text => text.split(' ').map(p => {
        const [i, v] = p.split(',').map(Number);
        return (x(i) + 0.5) + ',' + (y(v) + 0.5);
    }).join(' ');
    const bars = c.bars ? c.bars.trim().split(/\s+/) : [];
    const half = (c.body - 1) / 2;

    (c.grid || []).forEach(i => {
        add(svg, 'line', { x1: x(i) + 0.5, x2: x(i) + 0.5, y1: 1, y2: '100%', stroke: '#5a4a4a', 'stroke-dasharray': '3 3' });
    });
    (c.levels || []).forEach(([v, color, width = 1]) => {
        add(svg, 'rect', { x: 0, y: y(v), width: '100%', height: width, fill: color });
    });

    bars.forEach((bar, i) => {
        const up = bar[0] === 'u';
        const [high, top, bottom, low] = bar.slice(1).split(',').map(v => y(Number(v)));
        const color = c.hollow || (up ? '#1e90ff' : RED);
        const height = Math.max(1, bottom - top);
        add(svg, 'rect', { x: x(i), y: high, width: 1, height: Math.max(1, low - high), fill: color });
        add(svg, 'rect', { x: x(i) - half, y: top, width: c.body, height: height, fill: color });
        if (c.hollow && up && height > 2) {
            add(svg, 'rect', { x: x(i), y: top + 1, width: 1, height: height - 2, fill: '#000' });
        }
    });

    (c.lines || []).forEach(([color, width, text]) => {
        add(svg, 'polyline', { points: points(text), fill: 'none', stroke: color, 'stroke-width': width });
    });
    (c.links || []).forEach(text => {
        add(svg, 'polyline', { points: points(text), fill: 'none', stroke: '#e0442a', 'stroke-dasharray': '3 2' });
    });
    (c.trades ? c.trades.trim().split(/\s+/) : []).forEach(trade => {
        const [i, v] = trade.slice(1).split(',').map(Number);
        const sell = trade[0] === 's';
        const flip = sell ? 1 : -1;
        const shape = [[-2, -3], [2, -3], [2, -1], [4, -1], [0, 4], [-4, -1], [-2, -1]];
        add(svg, 'polygon', {
            points: shape.map(([dx, dy]) => (x(i) + 0.5 + dx) + ',' + (y(v) + 0.5 + dy * flip)).join(' '),
            fill: sell ? '#e0442a' : '#0a5fb4', stroke: '#fff', 'shape-rendering': 'auto'
        });
    });

    // chart shift marker above the last bar
    const last = x(Math.max(0, bars.length - 1));
    add(svg, 'polygon', { points: `${last - 5},0 ${last + 6},0 ${last + 0.5},6`, fill: '#778899' });
}

document.querySelectorAll('.series').forEach(svg => drawChart(svg, charts[svg.dataset.chart]));
```
